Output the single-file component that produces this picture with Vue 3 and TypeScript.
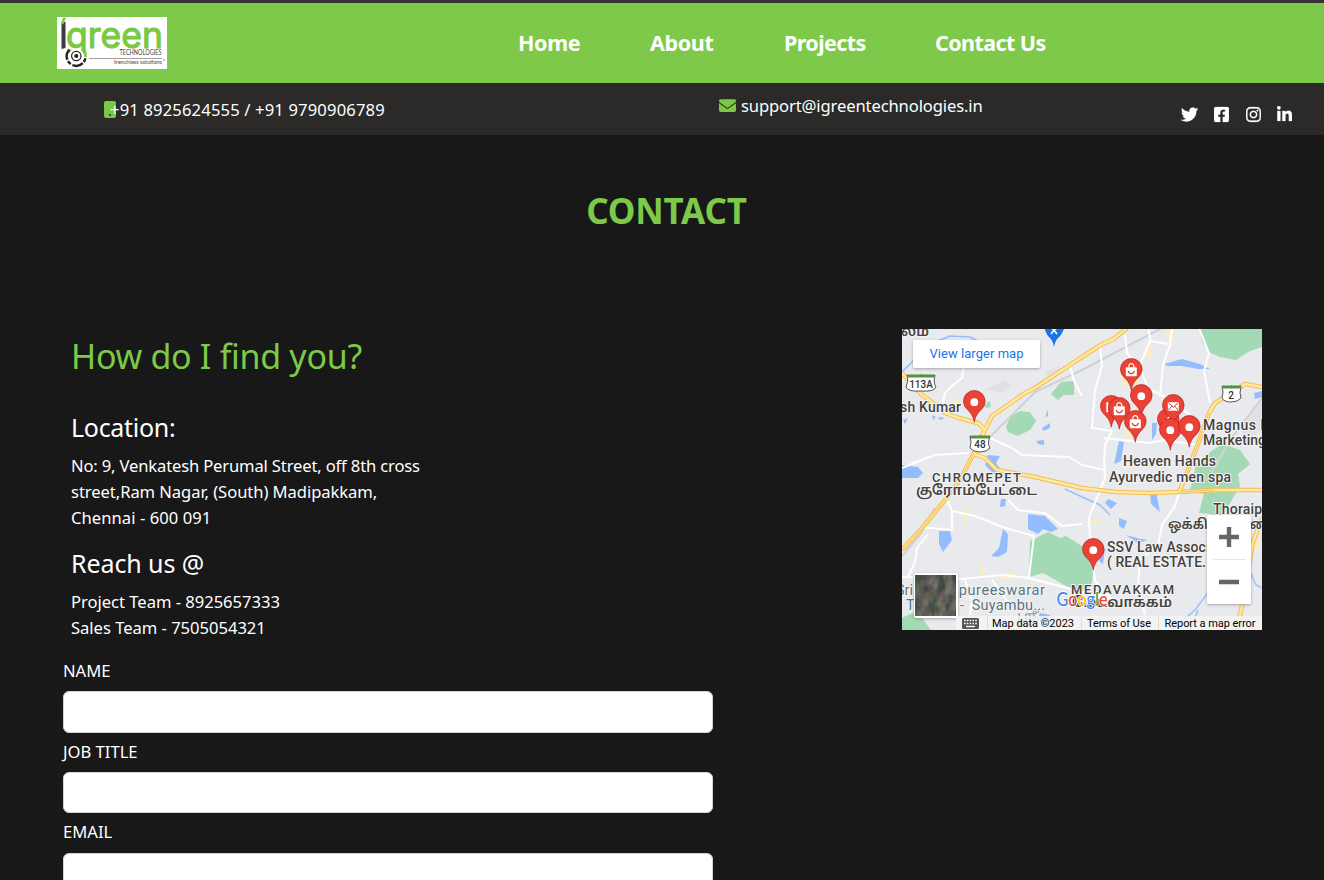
<script setup lang="ts">
interface NavLink { label: string; width: number; tight: boolean }
interface Pin { x: number; y: number; kind: 'dot' | 'bag' | 'mail' | 'bar' | 'call' }
interface Social { name: string; box: string; width: number; path: string }

const links: NavLink[] = [
  { label: 'Home', width: 62, tight: false },
  { label: 'About', width: 64, tight: false },
  { label: 'Projects', width: 81, tight: true },
  { label: 'Contact Us', width: 111, tight: true },
]

const socials: Social[] = [
  { name: 'Twitter', box: '0 0 512 512', width: 17, path: 'M459.37 151.716c.325 4.548.325 9.097.325 13.645 0 138.72-105.583 298.558-298.558 298.558-59.452 0-114.68-17.219-161.137-47.106 8.447.974 16.568 1.299 25.34 1.299 49.055 0 94.213-16.568 130.274-44.832-46.132-.975-84.792-31.188-98.112-72.772 6.498.974 12.995 1.624 19.818 1.624 9.421 0 18.843-1.3 27.614-3.573-48.081-9.747-84.143-51.98-84.143-102.985v-1.299c13.969 7.797 30.214 12.67 47.431 13.319-28.264-18.843-46.781-51.005-46.781-87.391 0-19.492 5.197-37.36 14.294-52.954 51.655 63.675 129.3 105.258 216.365 109.807-1.624-7.797-2.599-15.918-2.599-24.04 0-57.828 46.782-104.934 104.934-104.934 30.213 0 57.502 12.67 76.67 33.137 23.715-4.548 46.456-13.32 66.599-25.34-7.798 24.366-24.366 44.833-46.132 57.827 21.117-2.273 41.584-8.122 60.426-16.243-14.292 20.791-32.161 39.308-52.628 54.253z' },
  { name: 'Facebook', box: '0 0 448 512', width: 15, path: 'M400 32H48A48 48 0 0 0 0 80v352a48 48 0 0 0 48 48h137.25V327.69h-63V256h63v-54.64c0-62.15 37-96.48 93.67-96.48 27.14 0 55.52 4.84 55.52 4.84v61h-31.27c-30.81 0-40.42 19.12-40.42 38.73V256h68.78l-11 71.69h-57.78V480H400a48 48 0 0 0 48-48V80a48 48 0 0 0-48-48z' },
  { name: 'Instagram', box: '0 0 448 512', width: 15, path: 'M224.1 141c-63.6 0-114.9 51.3-114.9 114.9s51.3 114.9 114.9 114.9S339 319.500 339 255.900 287.700 141 224.100 141zm0 189.600c-41.100 0-74.700-33.500-74.700-74.700s33.500-74.700 74.700-74.700 74.700 33.500 74.700 74.700-33.600 74.700-74.700 74.700zm146.400-194.300c0 14.900-12 26.800-26.800 26.800-14.900 0-26.800-12-26.800-26.800s12-26.800 26.800-26.800 26.800 12 26.800 26.800zm76.100 27.200c-1.700-35.900-9.900-67.700-36.200-93.900-26.200-26.200-58-34.400-93.900-36.200-37-2.100-147.900-2.100-184.900 0-35.800 1.700-67.600 9.900-93.900 36.100s-34.400 58-36.200 93.900c-2.100 37-2.100 147.900 0 184.900 1.700 35.900 9.900 67.700 36.200 93.900s58 34.400 93.900 36.200c37 2.100 147.900 2.100 184.900 0 35.900-1.700 67.700-9.900 93.900-36.200 26.200-26.200 34.400-58 36.200-93.900 2.100-37 2.100-147.800 0-184.800zM398.800 388c-7.800 19.600-22.900 34.700-42.600 42.600-29.500 11.700-99.500 9-132.100 9s-102.700 2.600-132.100-9c-19.600-7.800-34.700-22.900-42.600-42.600-11.700-29.500-9-99.500-9-132.100s-2.600-102.700 9-132.100c7.800-19.600 22.900-34.700 42.600-42.600 29.500-11.700 99.500-9 132.100-9s102.700-2.600 132.100 9c19.600 7.800 34.700 22.900 42.600 42.600 11.700 29.500 9 99.500 9 132.100s2.700 102.700-9 132.100z' },
  { name: 'LinkedIn', box: '0 0 448 512', width: 15, path: 'M100.28 448H7.4V148.9h92.88zM53.79 108.1C24.09 108.1 0 83.5 0 53.8a53.79 53.79 0 0 1 107.58 0c0 29.7-24.1 54.3-53.79 54.3zM447.9 448h-92.68V302.4c0-34.7-.7-79.2-48.29-79.2-48.29 0-55.69 37.7-55.69 76.700V448h-92.78V148.900h89.080v40.800h1.300c12.400-23.500 42.690-48.300 87.880-48.300 94 0 111.280 61.900 111.280 142.300V448z' },
]

const fields: string[] = ['NAME', 'JOB TITLE', 'EMAIL']

const greens: string[] = [
  '1006,427 1010,417 1020,411 1030,412 1036,421 1030,430 1018,436 1008,432',
  '1051,394 1061,382 1074,381 1074,395 1064,395 1058,400',
  '1200,328 1262,328 1262,347 1248,352 1236,360 1220,357 1209,352 1202,341',
  '1213,450 1223,444 1240,450 1250,464 1238,474 1240,486 1230,503 1222,515 1199,513 1204,494 1190,491 1196,464',
  '1030,541 1048,532 1060,538 1066,536 1082,546 1094,560 1092,583 1082,592 1066,586 1052,578 1043,573 1029,577',
  '902,618 912,613 922,618 931,630 902,630',
  '984,405 990,401 991,407 986,408',
]
const waters: string[] = [
  '902,465 918,467 923,473 918,478 902,478',
  '988,455 1000,456 996,463 1001,470 994,474 985,465',
  '1028,514 1045,516 1058,529 1051,532 1043,529 1038,534 1028,529',
  '939,531 950,531 952,540 943,552 939,544',
  '1003,529 1008,534 1007,552 998,557 991,556 999,548',
  '1164,364 1182,359 1200,364 1210,369 1198,369 1182,366 1168,366',
  '1119,441 1124,442 1121,461 1114,464',
  '1152,423 1157,423 1156,434 1152,440',
  '1150,491 1156,492 1160,512 1151,504',
  '1119,518 1127,521 1124,529 1119,526',
  '1108,499 1117,503 1111,509 1105,503',
  '1096,542 1105,549 1103,564 1099,561',
  '1036,441 1044,440 1044,445 1038,444',
  '1042,428 1050,423 1050,428 1043,431',
  '1045,417 1048,410 1048,416',
  '1254,393 1262,391 1262,397 1255,399',
  '932,415 936,417 933,420',
  '938,417 945,418 940,420',
  '1001,499 1006,499 1005,506 1000,507',
  '1040,613 1050,615 1047,626 1037,620',
  '1126,535 1141,539 1148,540 1138,543',
  '903,420 908,418 905,424',
]
const streets: string[] = [
  'M964 361L962 378L952 386L945 393L942 406',
  'M990 438L1012 448L1022 455L1045 456L1069 457L1082 465L1105 470',
  'M902 468L919 461L935 455L969 453',
  'M1070 366L1074 381L1082 396',
  'M1100 346L1102 366L1095 390L1092 428L1112 431L1105 445L1104 460L1105 478L1094 505L1089 518L1090 538L1095 581L1118 605',
  'M1125 335L1127 353L1140 368L1148 388L1172 401L1190 415',
  'M1172 328L1170 345L1163 365L1160 396',
  'M1168 344L1150 341L1140 365M1148 328L1151 342',
  'M1199 328L1209 353L1204 371L1210 403',
  'M1104 438L1149 443L1165 440L1198 445',
  'M947 500L952 511L975 516L1005 528L1034 536L1029 577',
  'M952 511L952 530L932 528L922 528M928 534L917 548L915 562L908 577',
  'M1008 500L1018 510L1045 513L1062 526L1082 524',
  'M902 577L962 579L1002 575L1029 578L1082 592L1118 600',
  'M1179 493L1175 506L1162 525L1158 545L1140 560L1138 585L1145 615',
  'M965 580L972 600L970 615M992 580L1010 605',
]
const highways: string[] = [
  'M902 373L922 395L929 400L945 413L959 418L978 423L985 430',
  'M1127 328L1115 338L1099 346L1082 357L1070 365L1035 388L1025 393L992 416L985 430L974 453L960 480L945 500L922 528L902 550',
  'M974 454L985 458L997 470L1035 477L1082 488L1115 492L1149 493L1179 492L1215 490L1262 490',
  'M1262 387L1245 384L1232 393L1215 403L1209 413L1199 441L1185 478L1179 492',
  'M1262 518L1253 542L1242 605L1237 630',
]
const pins: Pin[] = [
  { x: 974, y: 402, kind: 'dot' },
  { x: 1131, y: 370, kind: 'bag' },
  { x: 1111, y: 407, kind: 'bar' },
  { x: 1119, y: 409, kind: 'bag' },
  { x: 1141, y: 396, kind: 'dot' },
  { x: 1135, y: 422, kind: 'bag' },
  { x: 1168, y: 420, kind: 'call' },
  { x: 1173, y: 406, kind: 'mail' },
  { x: 1170, y: 430, kind: 'dot' },
  { x: 1189, y: 427, kind: 'dot' },
  { x: 1093, y: 550, kind: 'dot' },
]
const pinShape = 'M0 20C-1.200 13-4 10.500-7 7.300A10.800 10.800 0 1 1 7 7.300C4 10.500 1.200 13 0 20Z'
</script>

<template>
  <div class="page">
    <header class="topbar">
      <svg class="logo" viewBox="0 0 110 52" width="110" height="52">
        <rect width="110" height="52" fill="#fff" />
        <path d="M4.500 5H8.500V31L4.500 32Z" fill="#3b3b3d" />
        <path d="M3.500 8L6 .5H9L6.500 7Z" fill="#7ac843" />
        <text class="logo-word" x="9" y="30.500" textLength="97" lengthAdjust="spacingAndGlyphs">green</text>
        <circle cx="19.300" cy="39" r="7.500" fill="#fff" />
        <path d="M25.500 31.500A9.500 9.500 0 0 1 28.500 40" fill="none" stroke="#7ac843" stroke-width="2.600" />
        <path d="M12.500 32.500A9.500 9.500 0 1 0 28.500 41" fill="none" stroke="#222" stroke-width="2.400" stroke-dasharray="11 1.500 4 2" />
        <circle cx="19.300" cy="39" r="4.700" fill="none" stroke="#222" stroke-width="1.200" />
        <circle cx="19.300" cy="39" r="2.100" fill="#222" />
        <text class="logo-sub" x="62.500" y="38" textLength="42" lengthAdjust="spacingAndGlyphs">TECHNOLOGIES</text>
        <path d="M32 41.500H105" stroke="#777" stroke-width=".7" />
        <text class="logo-sub small" x="57" y="46.500" textLength="48" lengthAdjust="spacingAndGlyphs">trenchless solutions</text>
        <circle cx="107" cy="43" r=".8" fill="#777" />
      </svg>
      <nav class="nav">
        <a v-for="l in links" :key="l.label" :class="{ tight: l.tight }" :style="{ width: l.width + 'px' }">{{ l.label }}</a>
      </nav>
    </header>

    <section class="infobar">
      <div class="phone">
        <svg viewBox="0 0 12 17" width="12" height="17"><rect width="12" height="17" rx="2" fill="#7ac843" /><circle cx="6" cy="14" r="1" fill="#2b2a29" /></svg>
        <span>+91 8925624555 / +91 9790906789</span>
      </div>
      <div class="mail">
        <svg viewBox="0 64 512 384" width="17" height="13" fill="#7ac843"><path d="M502.300 190.800c3.900-3.100 9.700-.2 9.700 4.700V400c0 26.500-21.500 48-48 48H48c-26.500 0-48-21.500-48-48V195.600c0-5 5.700-7.800 9.700-4.700 22.400 17.400 52.100 39.500 154.100 113.600 21.100 15.400 56.700 47.800 92.200 47.600 35.700.3 72-32.800 92.300-47.600 102-74.100 131.600-96.300 154-113.700zM256 320c23.200.4 56.600-29.200 73.400-41.400 132.700-96.300 142.800-104.700 173.400-128.700 5.800-4.500 9.200-11.500 9.200-18.900v-19c0-26.500-21.500-48-48-48H48c-26.500 0-48 21.500-48 48v19c0 7.400 3.400 14.300 9.200 18.900 30.600 23.900 40.700 32.400 173.400 128.700 16.800 12.200 50.200 41.800 73.400 41.400z" /></svg>
        <span>support@igreentechnologies.in</span>
      </div>
      <div class="socials">
        <svg v-for="s in socials" :key="s.name" :viewBox="s.box" :width="s.width" height="17" :aria-label="s.name"><path :d="s.path" fill="#fff" stroke="#fff" stroke-width="8" /></svg>
      </div>
    </section>

    <h1>CONTACT</h1>

    <main class="content">
      <section class="details">
        <h2>How do I find you?</h2>
        <h3 class="location">Location:</h3>
        <p><span class="l1">No: 9, Venkatesh Perumal Street, off 8th cross</span><br><span class="l2">street,Ram Nagar, (South) Madipakkam,</span><br><span class="l3">Chennai - 600 091</span></p>
        <h3 class="reach">Reach us @</h3>
        <p><span class="l4">Project Team - 8925657333</span><br><span class="l4">Sales Team - 7505054321</span></p>
        <form class="form">
          <label v-for="f in fields" :key="f"><span>{{ f }}</span><input type="text"></label>
        </form>
      </section>

      <svg class="map" viewBox="902 329 360 301" width="360" height="301">
        <defs>
          <filter id="soft" x="-20%" y="-20%" width="140%" height="150%"><feDropShadow dx="0" dy="1" stdDeviation="1.500" flood-opacity=".3" /></filter>
          <filter id="aerial" x="0" y="0" width="100%" height="100%" color-interpolation-filters="sRGB">
            <feTurbulence type="fractalNoise" baseFrequency=".13 .07" numOctaves="4" seed="6" />
            <feColorMatrix values=".5 0 0 0 .12  .32 .1 0 0 .16  .32 0 .1 0 .13  0 0 0 0 1" />
          </filter>
        </defs>
        <rect x="902" y="329" width="360" height="301" fill="#e8eaed" />
        <path d="M985 390L1005 380L1012 386L1003 392ZM1045 372L1060 365L1062 372L1048 381ZM1240 425L1262 400V430L1245 442Z" fill="#dfe1e5" />
        <polygon v-for="g in greens" :key="g" :points="g" fill="#a3dab5" />
        <polygon v-for="w in waters" :key="w" :points="w" fill="#94bdff" />
        <path d="M902 372L914 360L935 342L950 336L970 337L980 342" fill="none" stroke="#94bdff" stroke-width="1.500" />
        <path d="M1065 489L1080 496L1100 505L1110 515M1172 630L1195 610L1210 590M1247 565L1256 585L1262 588M1190 630L1198 610" fill="none" stroke="#9bc1fb" stroke-width="1.500" />
        <path d="M1162 328L1120 350L1082 370L1035 392L990 437M935 508L920 535L902 556M1262 398L1230 440L1210 475" fill="none" stroke="#ced1d6" stroke-width="2" />
        <path d="M1166 330H1174V341H1167ZM1145 345H1152V358H1144ZM1120 372L1132 365L1138 385L1123 385ZM954 398L962 400L960 404L954 402ZM980 422L992 432L985 438ZM1090 520H1100V524H1088ZM963 508H967V521H963ZM980 563H984V578H979ZM1002 573H1015V580H1002ZM1125 430H1132V442H1125ZM1248 540H1260V550H1248Z" fill="#fbedc3" />
        <path v-for="r in streets" :key="r" :d="r" class="street" />
        <path v-for="r in highways" :key="'o' + r" :d="r" class="hw-edge" />
        <path v-for="r in highways" :key="'i' + r" :d="r" class="hw-core" />
        <path d="M1179 492L1215 490M974 453L960 480L945 500L922 528L902 550M1209 413L1199 441L1185 478" fill="none" stroke="#f5b942" stroke-width=".8" />

        <g class="shields">
          <path d="M907 375Q914 378 921 375Q928 378 935 375Q933 383 936 387Q934 392 921 391Q908 392 906 387Q909 381 907 375Z" />
          <path d="M970 436Q975 439 980 436Q985 439 990 436Q987 444 990 448Q987 452 980 452Q973 452 970 448Q972 442 970 436Z" />
          <path d="M1222 386Q1227 389 1231 386Q1236 389 1241 386Q1239 394 1241 398Q1238 402 1231 402Q1224 402 1222 398Q1224 392 1222 386Z" />
          <g class="crest"><path d="M908 376H934" /><path d="M971 437H989" /><path d="M1223 387H1240" /></g>
          <text x="921" y="387.500">113A</text><text x="980" y="448">48</text><text x="1231" y="398.500">2</text>
        </g>

        <g class="labels">
          <text x="901" y="336" class="tamil" textLength="28" lengthAdjust="spacingAndGlyphs">லம்</text>
          <text x="900" y="412" textLength="61">sh Kumar</text>
          <text x="932" y="482" class="area" textLength="89">CHROMEPET</text>
          <text x="916" y="495" class="tamil" textLength="121" lengthAdjust="spacingAndGlyphs">குரோம்பேட்டை</text>
          <text x="1203" y="430" textLength="75">Magnus Inf</text>
          <text x="1203" y="445" textLength="63">Marketing</text>
          <text x="1123" y="466" textLength="93">Heaven Hands</text>
          <text x="1109" y="482" textLength="122">Ayurvedic men spa</text>
          <text x="1213" y="514" textLength="72">Thoraipakk</text>
          <text x="1168" y="529" class="tamil" textLength="106" lengthAdjust="spacingAndGlyphs">ஒக்கியம் துரை</text>
          <text x="1107" y="552" textLength="115">SSV Law Associat</text>
          <text x="1107" y="567" textLength="99">( REAL ESTATE.</text>
          <text x="1071" y="594" class="area" textLength="103">MEDAVAKKAM</text>
          <text x="1072" y="607" class="tamil" textLength="100" lengthAdjust="spacingAndGlyphs">மேடவாக்கம்</text>
          <text x="1017" y="621" class="tamil faint" textLength="19">ஸ்ரீ</text>
          <g class="temple">
            <text x="896" y="595" textLength="17">Sri</text>
            <text x="950" y="595" textLength="95">upureeswarar</text>
            <text x="906" y="610" textLength="48">Temple</text>
            <text x="960" y="610" textLength="85">-&#160; Suyambu...</text>
          </g>
        </g>

        <path d="M1044 326H1065Q1062 335 1058 338Q1055 341 1054 347Q1053 341 1050 338Q1046 335 1044 326Z" fill="#1a73e8" />
        <path d="M1051 334L1054 330L1057 334M1051 328L1054 330L1057 328" fill="none" stroke="#fff" stroke-width="1.500" />
        <g v-for="(p, i) in pins" :key="i" :transform="`translate(${p.x + 0.3} ${p.y + 0.2})`">
          <path :d="pinShape" fill="#ea4335" stroke="#b31412" stroke-width=".6" />
          <circle v-if="p.kind === 'dot'" r="3.900" fill="#fff" />
          <g v-else-if="p.kind === 'bag'"><rect x="-5.500" y="-3" width="11" height="9" rx="1" fill="#fff" /><path d="M-2.500 -3V-4A2.500 2.500 0 0 1 2.500 -4V-3" fill="none" stroke="#fff" stroke-width="1.200" /><path d="M-3 .5A3 3 0 0 0 3 .5" fill="none" stroke="#d33" stroke-width="1.200" /></g>
          <g v-else-if="p.kind === 'mail'"><rect x="-5.500" y="-4" width="11" height="8.500" fill="#fff" /><path d="M-5 -3.500L0 1L5 -3.500M-5 4L-1.500 0M5 4L1.500 0" fill="none" stroke="#d33" stroke-width="1" /></g>
          <path v-else-if="p.kind === 'bar'" d="M-4 -5V5" stroke="#fff" stroke-width="2" />
          <path v-else d="M-5 1H-2L1 -3" fill="none" stroke="#fff" stroke-width="2" />
        </g>

        <g filter="url(#soft)"><rect x="913" y="340" width="127" height="28" rx="2" fill="#fff" /></g>
        <text class="larger" x="929.500" y="358" textLength="94">View larger map</text>

        <g filter="url(#soft)"><rect x="914" y="573" width="44" height="45" rx="2" fill="#fff" /></g>
        <rect x="915.500" y="575" width="40.500" height="41" filter="url(#aerial)" />

        <text class="google" x="1056.500" y="606" textLength="51" lengthAdjust="spacingAndGlyphs"><tspan fill="#4285f4">G</tspan><tspan fill="#ea4335">o</tspan><tspan fill="#fbbc04">o</tspan><tspan fill="#4285f4">g</tspan><tspan fill="#34a853">l</tspan><tspan fill="#ea4335">e</tspan></text>

        <rect x="956" y="616" width="306" height="14" fill="#f5f5f5" fill-opacity=".8" />
        <path d="M987.500 616V630M1081.500 616V630M1158.500 616V630" stroke="#dcdcdc" />
        <rect x="962" y="618" width="17" height="11" rx="1.500" fill="#555" />
        <path d="M964 620.500H977M964 623.500H977" stroke="#fff" stroke-width="1.500" stroke-dasharray="1.600 1.200" /><path d="M966 626.500H975" stroke="#fff" stroke-width="1.300" />
        <g class="legal">
          <text x="992" y="627" textLength="82">Map data ©2023</text>
          <text x="1087" y="627" textLength="64">Terms of Use</text>
          <text x="1164.500" y="627" textLength="91">Report a map error</text>
        </g>

        <g filter="url(#soft)"><rect x="1207" y="515" width="44" height="89" rx="2" fill="#fff" /></g>
        <path d="M1213 559.500H1246" stroke="#e6e6e6" />
        <path d="M1219 537H1239M1229 527V547M1219 582H1239" stroke="#666" stroke-width="4.400" />
      </svg>
    </main>
  </div>
</template>

<style>
body { background: #181818; overflow: hidden; }
</style>

<style scoped>
.page {
  height: 880px;
  overflow: hidden;
  box-sizing: border-box;
  border-top: 3px solid #363435;
  background: #181818;
  color: #fff;
  font: 16.600px/26px "Noto Sans", "Open Sans", sans-serif;
}
.topbar { height: 80px; background: #7ec94a; display: flex; align-items: flex-start; }
.logo { margin: 14px 0 0 57px; flex: none; display: block; }
.logo-word { font: 36.500px Inter, sans-serif; fill: #7ac843; stroke: #7ac843; stroke-width: 1.100; }
.logo-sub { font: 6.800px Lato, sans-serif; fill: #444; }
.small { font-size: 6px; }
.nav { margin-left: 351px; display: flex; gap: 70px; padding-top: 24px; }
.nav a { font-size: 21.500px; line-height: 32px; font-weight: 700; white-space: nowrap; letter-spacing: -.35px; }
.nav .tight { letter-spacing: -.58px; }
.infobar { height: 52px; background: #2b2a29; display: flex; align-items: flex-start; white-space: nowrap; }
.phone { width: 615px; padding: 14px 0 0 104px; box-sizing: border-box; display: flex; }
.phone svg { margin: 4px -6px 0 0; flex: none; }
.phone span { letter-spacing: .15px; }
.mail { width: 462px; padding: 10px 0 0 104px; display: flex; gap: 5px; }
.mail svg { margin-top: 6px; flex: none; }
.mail span { letter-spacing: -.13px; }
.socials { display: flex; gap: 16.300px; padding-top: 23px; flex: none; }
.socials svg { display: block; }
h1 { margin: 50px 0 0 9px; height: 52px; text-align: center; font-size: 35px; line-height: 52px; color: #7ec94a; letter-spacing: -.2px; }
.content { display: flex; justify-content: space-between; margin: 92px 62px 0 63px; }
.details { width: 650px; }
h2 { margin: 5px 8px 0; font-size: 34px; line-height: 44px; font-weight: 400; color: #7ec94a; letter-spacing: -.3px; }
h3 { margin: 0 8px; font-size: 25px; line-height: 31px; font-weight: 400; }
.location { margin-top: 34px; letter-spacing: -.3px; }
.reach { margin-top: 17px; letter-spacing: -.1px; }
p { margin: 10px 8px 0; }
.l1 { letter-spacing: -.16px; }
.l2 { letter-spacing: -.07px; }
.l3 { letter-spacing: .05px; }
.l4 { letter-spacing: -.03px; }
.form { margin-top: 17px; }
.form label { display: block; height: 80.700px; }
.form span { display: block; line-height: 26px; }
.form input { display: block; width: 650px; height: 41.500px; margin-top: 7.200px; border: 1px solid #ced4da; border-radius: 6px; background: #fff; box-sizing: border-box; }
.map { display: block; flex: none; overflow: hidden; }
.street { fill: none; stroke: #fff; stroke-width: 2; stroke-linejoin: round; }
.hw-edge { fill: none; stroke: #f5bd4b; stroke-width: 4.500; stroke-linejoin: round; }
.hw-core { fill: none; stroke: #fde8a6; stroke-width: 2.600; stroke-linejoin: round; }
.shields > path { fill: #fff; stroke: #555; stroke-width: 1; }
.crest path { stroke: #53923f; stroke-width: 3; }
.shields text { font: 500 10px Roboto, sans-serif; fill: #333; text-anchor: middle; }
.labels text { font: 500 14px Roboto, sans-serif; fill: #45423f; stroke: #f4f4f4; stroke-width: 2px; paint-order: stroke; stroke-linejoin: round; }
.labels .area { font-size: 13px; }
.labels .tamil { font: 600 14px "Noto Sans Tamil", "Noto Sans", sans-serif; }
.labels .faint { fill: #9aa; }
.labels .temple text { font-weight: 400; fill: #577580; font-size: 14.500px; }
.larger { font: 13px Roboto, sans-serif; fill: #1a73e8; }
.google { font: 500 19px Lato, sans-serif; stroke: #fff; stroke-width: 1.500px; paint-order: stroke; }
.legal text { font: 11px Roboto, sans-serif; fill: #000; }
</style>
